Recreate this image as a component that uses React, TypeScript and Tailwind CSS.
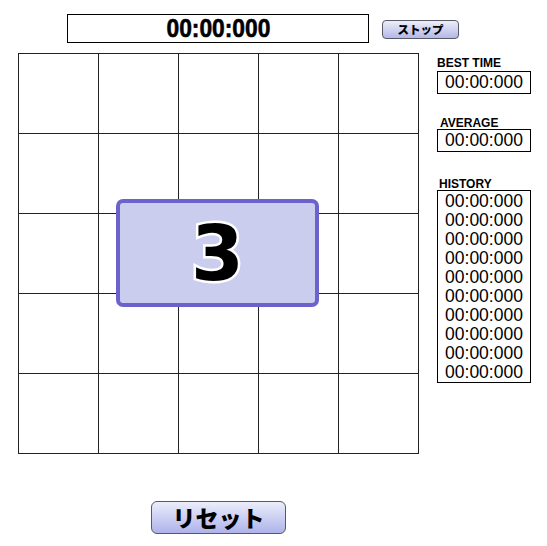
import React from "react";

const sans = { fontFamily: '"Liberation Sans", Arial, sans-serif' };

export default function App() {
  const history = Array.from({ length: 10 }, () => "00:00:000");
  const cells = Array.from({ length: 25 }, (_, i) => i);
  return (
    <div className="w-[547px] h-[546px] bg-white relative overflow-hidden" style={sans}>
      <div className="flex pt-[14px]">
        <div className="ml-[67px] w-[302px] h-[29px] border border-black flex items-center justify-center">
          <span className="inline-block font-bold text-[26.5px] leading-none scale-x-[0.86] [font-family:'Liberation_Sans',Arial,sans-serif] [-webkit-text-stroke:0.6px_black]">
            00:00:000
          </span>
        </div>
        <button className="ml-[13px] mt-[6px] w-[77px] h-[19px] rounded-[4px] border border-[#555a66] bg-gradient-to-b from-[#eceefa] to-[#b4b8e6] flex items-center justify-center text-[11.5px] font-black leading-none text-black [font-family:'Noto_Sans_CJK_JP',sans-serif]">
          ストップ
        </button>
      </div>
      <div className="flex mt-[10px]">
        <div className="ml-[18px] relative">
          <div className="grid grid-cols-5 w-[401px] h-[401px] border-l border-t border-[#222]">
            {cells.map((c) => (
              <div key={c} className="w-[80px] h-[80px] border-r border-b border-[#222]" />
            ))}
          </div>
          <div className="absolute left-[98px] top-[146px] w-[203px] h-[108px] rounded-[7px] border-[4px] border-[#6c62cc] bg-[#cbcdee] flex items-center justify-center">
            <span className="text-[76px] font-black leading-none text-black [-webkit-text-stroke:5px_white] [paint-order:stroke_fill] [font-family:'DejaVu_Sans',sans-serif] mt-[2px]">
              3
            </span>
          </div>
        </div>
        <div className="ml-[18px] w-[94px] flex flex-col">
          <div className="mt-[3px] text-[12px] leading-[14px] font-bold">BEST TIME</div>
          <div className="mt-[1px] h-[23px] border border-black text-center text-[17.5px] leading-[21px]">00:00:000</div>
          <div className="mt-[22px] ml-[3px] text-[12px] leading-[14px] font-bold">AVERAGE</div>
          <div className="-mt-[1px] h-[23px] border border-black text-center text-[17.5px] leading-[21px]">00:00:000</div>
          <div className="mt-[25px] ml-[2px] text-[12px] leading-[14px] font-bold">HISTORY</div>
          <div className="-mt-[1px] border border-black pt-[1px] text-center text-[17.5px] leading-[19px]">
            {history.map((h, i) => (
              <div key={i}>{h}</div>
            ))}
          </div>
        </div>
      </div>
      <div className="absolute left-[151px] top-[501px] w-[135px] h-[33px] rounded-[6px] border border-[#555a66] bg-gradient-to-b from-[#eceefa] to-[#aeb3ea] flex items-center justify-center">
        <span className="text-[23px] font-black leading-none [font-family:'Noto_Sans_CJK_JP',sans-serif]">リセット</span>
      </div>
    </div>
  );
}
